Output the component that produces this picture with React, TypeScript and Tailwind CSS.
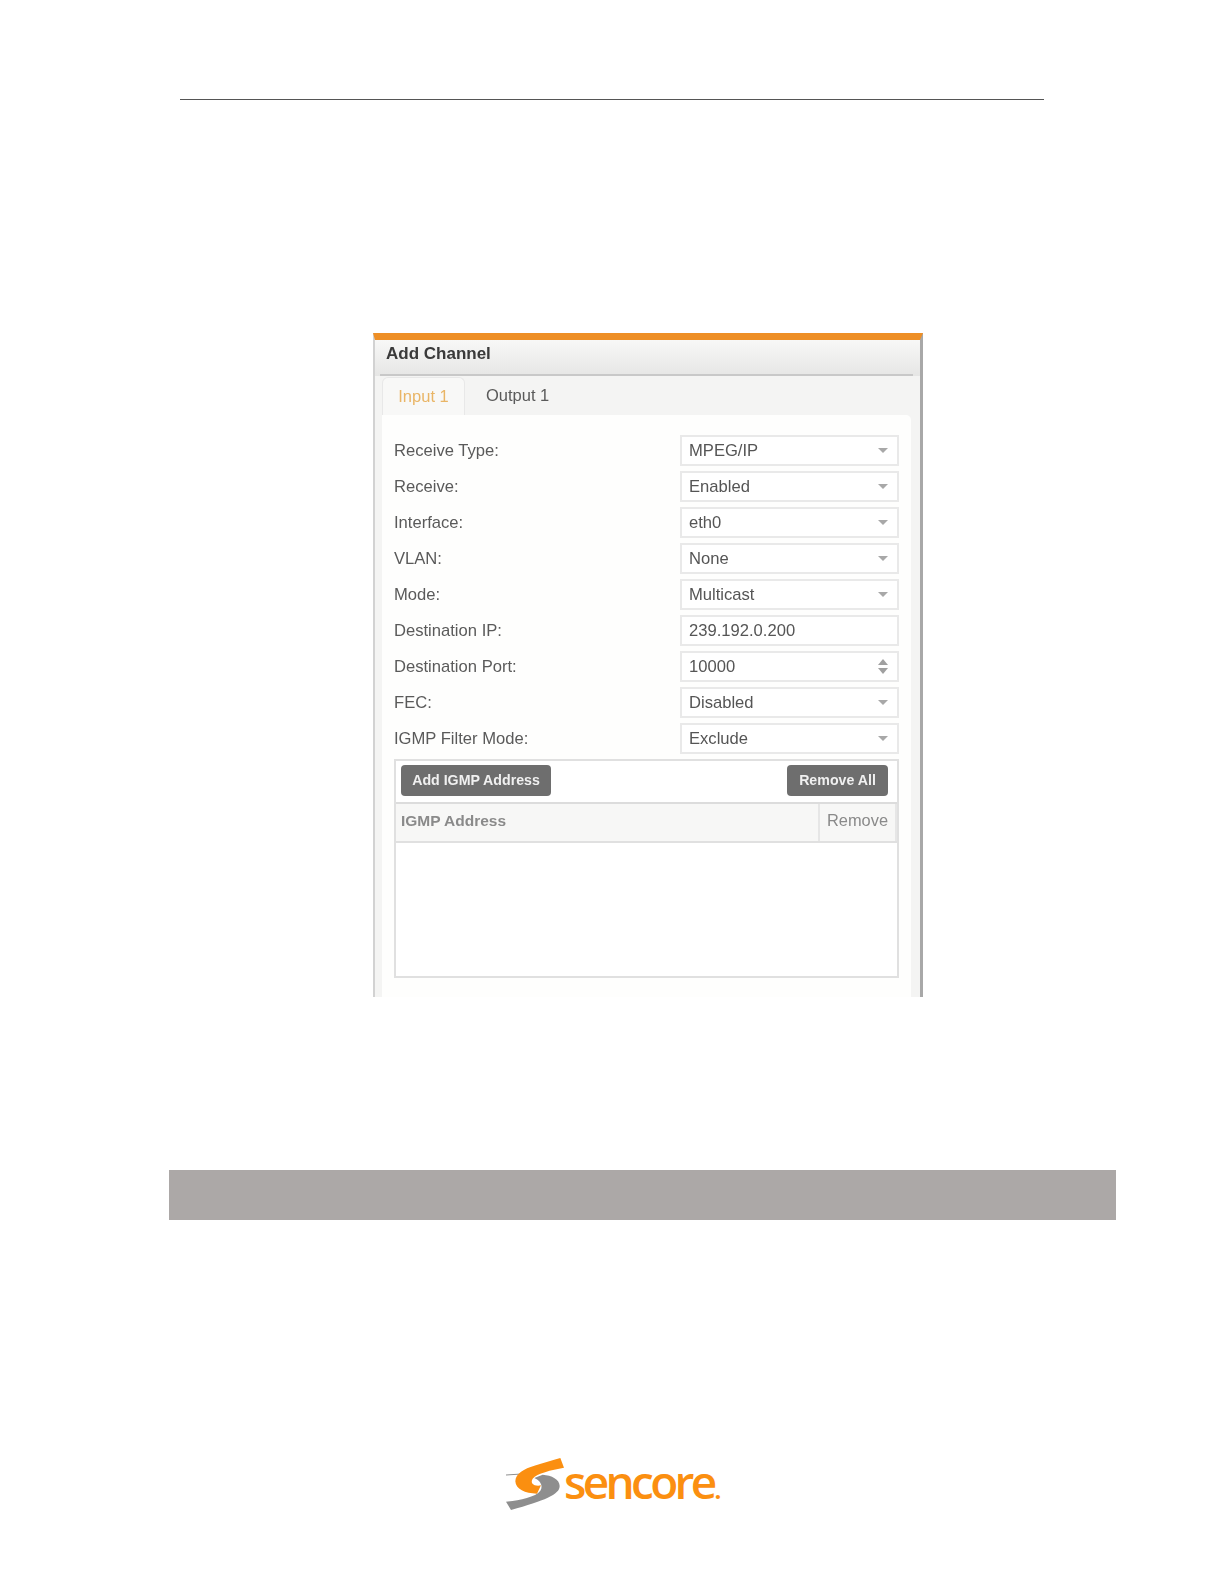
const rows = [
  { label: 'Receive Type:', value: 'MPEG/IP', kind: 'select' },
  { label: 'Receive:', value: 'Enabled', kind: 'select' },
  { label: 'Interface:', value: 'eth0', kind: 'select' },
  { label: 'VLAN:', value: 'None', kind: 'select' },
  { label: 'Mode:', value: 'Multicast', kind: 'select' },
  { label: 'Destination IP:', value: '239.192.0.200', kind: 'text' },
  { label: 'Destination Port:', value: '10000', kind: 'number' },
  { label: 'FEC:', value: 'Disabled', kind: 'select' },
  { label: 'IGMP Filter Mode:', value: 'Exclude', kind: 'select' },
];

function FieldRow({ label, value, kind }: { label: string; value: string; kind: string }) {
  return (
    <div className="flex items-center justify-between h-[31px]">
      <span className="pt-[2px] text-[16.6px] text-[#5a5a5a]">{label}</span>
      <div className="w-[219px] h-[31px] flex items-center justify-between pl-[7px] pr-[9px] bg-white border-2 border-[#e9e9e9] text-[16.6px] text-[#555555]">
        <span className="pt-[2px]">{value}</span>
        {kind === 'select' && (
          <span className="w-0 h-0 border-x-[5px] border-x-transparent border-t-[5px] border-t-[#a8a8a8]" />
        )}
        {kind === 'number' && (
          <span className="flex flex-col gap-[3px]">
            <span className="w-0 h-0 border-x-[5px] border-x-transparent border-b-[6px] border-b-[#a0a0a0]" />
            <span className="w-0 h-0 border-x-[5px] border-x-transparent border-t-[6px] border-t-[#a0a0a0]" />
          </span>
        )}
      </div>
    </div>
  );
}

function SencoreLogo() {
  return (
    <div className="flex items-start ml-[501px] mt-[230px]">
      <svg width="70" height="65" viewBox="0 0 210 195" className="shrink-0">
        <path d="M15 75 L62 72" stroke="#8f8f8f" strokeWidth="3" fill="none" />
        <path
          d="M15 155 C50 152 104 142 118 122 C128 106 116 90 100 84 L125 74 C152 76 176 88 176 108 C176 134 130 152 30 180 Z"
          fill="#8e8e8e"
        />
        <path
          d="M178 24 L189 53 C150 60 108 70 95 86 C86 100 100 110 120 106 L108 131 C72 130 44 118 43 94 C43 70 70 56 100 47 C125 39 155 31 178 24 Z"
          fill="#fb8f10"
        />
      </svg>
      <span className="ml-[-7px] mt-[3px] text-[46px] leading-[56px] font-semibold tracking-[-3.7px] text-[#fb8f10] font-['Open_Sans',sans-serif]">
        sencore<span className="text-[24px] font-bold ml-[1px]">.</span>
      </span>
    </div>
  );
}

export default function App() {
  return (
    <div className="w-[1224px] h-[1584px] bg-white overflow-hidden font-['Liberation_Sans',Arial,sans-serif]">
      <div className="pt-[99px] ml-[180px] w-[864px]">
        <div className="h-[1px] bg-[#555555]" />
      </div>

      <div className="ml-[373px] mt-[233px] w-[550px] h-[664px] flex flex-col bg-[#f4f4f3] border-t-[7px] border-t-[#ee8f26] border-l-2 border-l-[#d2d2d2] border-r-[3px] border-r-[#a8a8a8] blur-[0.4px]">
        <div className="h-[36px] pl-[5px] pr-[7px] bg-gradient-to-b from-[#f8f8f7] to-[#e6e6e5]">
          <div className="h-full flex items-center pl-[6px] pb-[7px] border-b-2 border-b-[#c8c8c8]">
            <h1 className="text-[17px] font-bold text-[#3a3a3a]">Add Channel</h1>
          </div>
        </div>

        <div className="flex h-[38px] pl-[7px] mt-[1px]">
          <div className="w-[83px] pb-[1px] flex items-center justify-center bg-[#f8f8f7] border border-b-0 border-[#e8e8e8] rounded-t-[6px] text-[16.5px] text-[#e9b566]">
            Input 1
          </div>
          <div className="pl-[21px] pb-[2px] flex items-center text-[16.5px] text-[#5a5a5a]">Output 1</div>
        </div>

        <div className="flex-1 ml-[7px] mr-[9px] px-[12px] pt-[20px] bg-[#fefefd] rounded-tr-[5px]">
          <div className="flex flex-col gap-[5px]">
            {rows.map((r) => (
              <FieldRow key={r.label} {...r} />
            ))}
          </div>

          <div className="mt-[5px] h-[219px] flex flex-col bg-white border-2 border-[#e0e0e0]">
            <div className="h-[43px] shrink-0 flex items-center justify-between pl-[5px] pr-[9px] pb-[2px] border-b-2 border-b-[#dcdcdc]">
              <button className="w-[150px] h-[31px] rounded-[4px] bg-[#6e6e6e] text-[14.2px] font-bold text-[#f0f0f0]">
                Add IGMP Address
              </button>
              <button className="w-[101px] h-[31px] rounded-[4px] bg-[#6e6e6e] text-[14.2px] font-bold text-[#f0f0f0]">
                Remove All
              </button>
            </div>
            <div className="h-[39px] shrink-0 flex bg-[#f7f7f6] border-b-2 border-b-[#e0e0e0] text-[15.5px] font-bold text-[#8a8a8a]">
              <div className="flex-1 flex items-center pl-[5px] pb-[3px]">IGMP Address</div>
              <div className="w-[79px] pb-[5px] flex items-center justify-center text-[16.4px] font-normal border-x-2 border-x-[#e6e6e6]">Remove</div>
            </div>
          </div>
        </div>
      </div>

      <div className="ml-[169px] mt-[173px] w-[947px] h-[50px] bg-[#aca8a7]" />

      <SencoreLogo />
    </div>
  );
}
